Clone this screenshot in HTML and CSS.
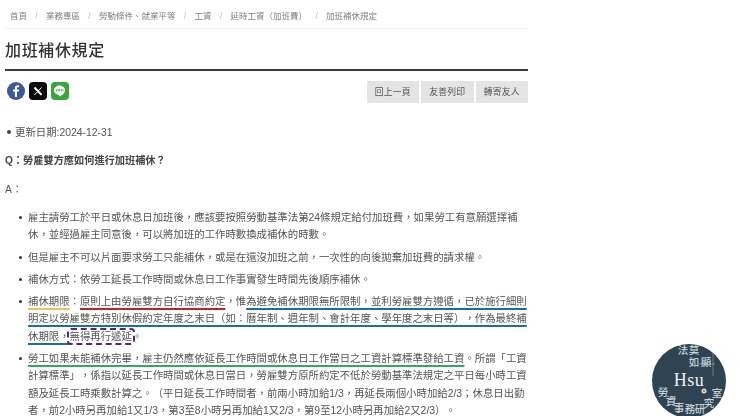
FILE: index.html
```html
<!DOCTYPE html>
<html lang="zh-Hant">
<head>
<meta charset="utf-8">
<title>加班補休規定</title>
<link rel="stylesheet" href="styles.css">
</head>
<body>
<main class="page">
  <nav class="crumbs">
    <span>首頁</span><i>/</i><span>業務專區</span><i>/</i><span>勞動條件、就業平等</span><i>/</i><span>工資</span><i>/</i><span>延時工資（加班費）</span><i>/</i><span>加班補休規定</span>
  </nav>
  <h1 class="title">加班補休規定</h1>
  <div class="tools">
    <div class="share">
      <svg class="ico" viewBox="0 0 18 18"><circle cx="9" cy="9" r="9" fill="#3b5998"/><path d="M10 15V9.600h1.800l.3-2.100H10V6.200c0-.6.200-1 1-1h1.100V3.300C11.800 3.300 11.300 3.200 10.700 3.200 9 3.200 7.900 4.200 7.900 6v1.500H6v2.100h1.900V15z" fill="#fff"/></svg>
      <svg class="ico" viewBox="0 0 18 18"><rect width="18" height="18" rx="4" fill="#0b0b0b"/><path d="M5.500 5.500l7 7.400" stroke="#fff" stroke-width="2" fill="none"/><path d="M12.500 5.500l-7 7.400" stroke="#fff" stroke-width="1" fill="none"/></svg>
      <svg class="ico" viewBox="0 0 18 18"><rect width="18" height="18" rx="4" fill="#3aa63a"/><path d="M9 3.500c-3.300 0-6 2.100-6 4.800 0 2.400 2.100 4.300 5 4.700.6.100.3 1 .3 1.300 0 .4.500.3 1 0 1.700-1 4.700-3.100 4.700-6 0-2.700-2.700-4.800-6-4.800z" fill="#fff"/><path d="M5.600 7v2.400M7.200 7v2.400M8.600 7v2.400M10.400 7v2.400M12 7v2.400" stroke="#3aa63a" stroke-width=".8"/></svg>
    </div>
    <div class="btns">
      <a class="btn">回上一頁</a>
      <a class="btn">友善列印</a>
      <a class="btn">轉寄友人</a>
    </div>
  </div>
  <ul class="meta"><li>更新日期:2024-12-31</li></ul>
  <p class="q">Q：勞雇雙方應如何進行加班補休？</p>
  <p class="a">A：</p>
  <ul class="list">
    <li>雇主請勞工於平日或休息日加班後，應該要按照勞動基準法第24條規定給付加班費，如果勞工有意願選擇補休，並經過雇主同意後，可以將加班的工作時數換成補休的時數。</li>
    <li>但是雇主不可以片面要求勞工只能補休，或是在還沒加班之前，一次性的向後拋棄加班費的請求權。</li>
    <li>補休方式：依勞工延長工作時間或休息日工作事實發生時間先後順序補休。</li>
    <li><span class="mark yellow">補休期限</span>：<span class="mark red">原則上由勞雇雙方自行協商約定</span>，惟<span class="mark blue">為避免補休期限無所限制，並利勞雇雙方遵循，已於施行細則明定以勞雇雙方特別休假約定年度之末日（如：曆年制、週年制、會計年度、學年度之末日等），作為最終補休期限，</span><span class="boxed">無得再行遞延</span>。</li>
    <li><span class="mark green">勞工如果未能補休完畢，雇主仍然應依延長工作時間或休息日工作當日之工資計算標準發給工資</span>。所謂「工資計算標準」，係指以延長工作時間或休息日當日，勞雇雙方原所約定不低於勞動基準法規定之平日每小時工資額及延長工時乘數計算之。（平日延長工作時間者，前兩小時加給1/3，再延長兩個小時加給2/3；休息日出勤者，前2小時另再加給1又1/3，第3至8小時另再加給1又2/3，第9至12小時另再加給2又2/3）。</li>
  </ul>
</main>
<svg class="seal" viewBox="0 0 76 76">
  <circle cx="38" cy="38" r="37" fill="#2e4453"/>
  <path d="M48 21h16M62 9v24" stroke="#aab6bd" stroke-width=".5"/>
  <g class="seal-cjk">
    <text x="32" y="11">法</text><text x="43" y="11">莫</text>
    <text x="43" y="23">如</text><text x="55" y="23">顯</text>
    <text x="12" y="53">勞</text><text x="20" y="62">資</text><text x="28" y="69">事</text><text x="39" y="70">務</text><text x="49" y="70">研</text><text x="58" y="64">究</text><text x="66" y="54">室</text>
  </g>
  <text class="seal-name" x="38" y="43" text-anchor="middle">Hsu</text>
  <circle cx="53" cy="48" r="2.500" fill="#e8dcc8"/><circle cx="53" cy="48" r="1" fill="#a0603a"/>
</svg>
</body>
</html>
```
FILE: styles.css
```css
html, body { margin: 0; padding: 0; height: 416px; overflow: hidden; background: #fff; }
body { font-family: "Liberation Sans", "Noto Sans CJK TC", sans-serif; color: #555; font-size: 10.4px; text-spacing-trim: space-all; }
.page { width: 523px; margin-left: 5px; filter: blur(.35px); }
.crumbs { padding: 10px 0 0 5px; box-sizing: border-box; height: 29px; border-bottom: 1px solid #f0f0f0; font-size: 8.5px; line-height: 12px; color: #808080; white-space: nowrap; display: flex; }
.crumbs i { font-style: normal; color: #bbb; width: 19px; text-align: center; }
.title { margin: 0; height: 42px; box-sizing: border-box; line-height: 43px; font-size: 16px; letter-spacing: .65px; font-weight: 500; color: #333; border-bottom: 2px solid #3c3c3c; }
.tools { display: flex; justify-content: space-between; align-items: flex-start; margin-top: 10px; }
.share { display: flex; gap: 4px; padding: 1px 0 0 2px; }
.ico { width: 18px; height: 18px; display: block; }
.btns { display: flex; gap: 2px; }
.btn { width: 52.500px; height: 22px; line-height: 22px; text-align: center; background: #e4e4e4; font-size: 8.8px; letter-spacing: .2px; color: #555; }
.meta { list-style: none; margin: 21px 0 0; padding: 0 0 0 10px; line-height: 17px; position: relative; }
.meta li::before { content: ""; position: absolute; left: 2px; top: 6px; width: 4px; height: 4px; border-radius: 50%; background: #444; }
.q { margin: 11px 0 0; font-weight: bold; line-height: 17px; color: #444; font-size: 10.200px; }
.a { margin: 12px 0 0; line-height: 17px; }
.list { list-style: none; margin: 11px 0 0; padding: 0 0 0 23px; }
.list li { line-height: 17.300px; margin-bottom: 5px; position: relative; }
.list li::before { content: ""; position: absolute; left: -9.500px; top: 7px; width: 3px; height: 3px; border-radius: 50%; background: #333; }
.mark { text-decoration: underline; text-decoration-thickness: 1.500px; text-underline-offset: 2.500px; text-decoration-skip-ink: none; }
.yellow { text-decoration-color: #e8c65a; }
.red { text-decoration-color: #c8202a; }
.blue { text-decoration-color: #1a6fa8; }
.green { text-decoration-color: #2fa86a; }
.boxed { border: 2px dashed #5a2380; border-radius: 4px; margin: 0 -3px 0 -3px; padding: 1px; }
.seal { position: absolute; left: 651px; top: 343px; width: 76px; height: 76px; }
.seal-cjk { font-family: "Noto Sans CJK TC", serif; font-size: 10.500px; fill: #dfe4e6; text-anchor: middle; }
.seal-name { font-family: "Liberation Serif", serif; font-size: 18px; fill: #eef0f0; letter-spacing: .5px; }
```
